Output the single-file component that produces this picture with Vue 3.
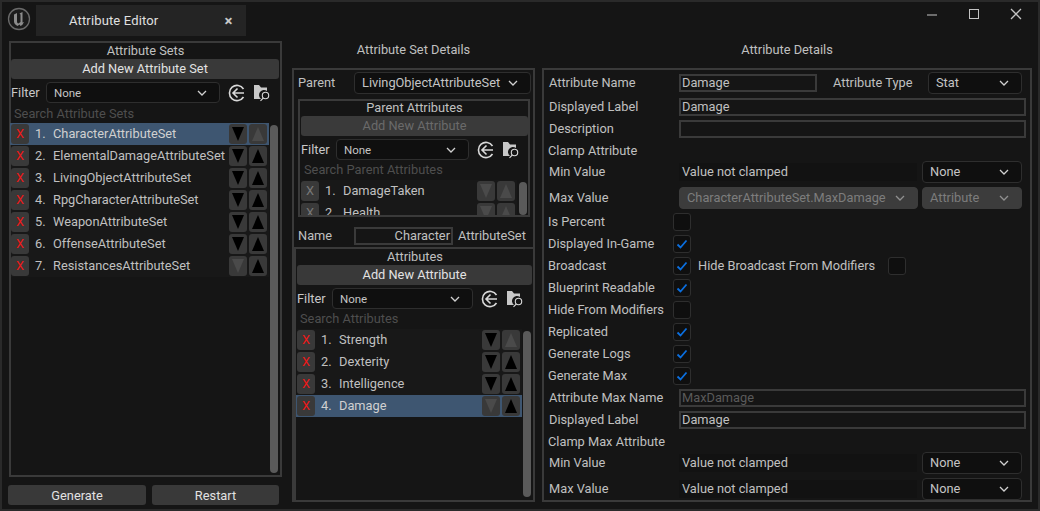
<template>
  <div class="win">
    <header class="top">
      <svg class="logo" width="24" height="24" viewBox="0 0 24 24">
        <circle cx="12" cy="12" r="10.5" fill="#1b1b1b" stroke="#6a6a6a" stroke-width="1.3" />
        <path d="M7 7.5 10 6 10 14.5Q10 16.5 11.5 16.5L13.5 15V7.5L12.500 6.5 15.5 5V15.5L17 15Q15.5 18.5 13.5 19L12.500 17.500 10.5 19Q7 17 7 14.5Z" fill="#8c8c8c" />
      </svg>
      <div class="tab"><span>Attribute Editor</span><i>×</i></div>
      <div class="winbtns">
        <svg width="16" height="16" viewBox="0 0 16 16"><path d="M1 8H11" stroke="#c4c4c4" stroke-width="1" /></svg>
        <svg width="16" height="16" viewBox="0 0 16 16"><rect x="1.5" y="2.5" width="9" height="9" fill="none" stroke="#c4c4c4" /></svg>
        <svg width="16" height="16" viewBox="0 0 16 16"><path d="M1 2L11 12M11 2L1 12" stroke="#c4c4c4" stroke-width="1.3" /></svg>
      </div>
    </header>

    <main class="cols">
      <!-- Attribute sets column -->
      <section class="col-sets">
        <div class="panel sets">
          <div class="ttl">Attribute Sets</div>
          <button class="btn">Add New Attribute Set</button>
          <div class="filter">
            <span>Filter</span>
            <div class="sel w174"><em>None</em><svg class="chev" viewBox="0 0 10 6"><path d="M1 1L5 5 9 1" /></svg></div>
            <svg class="ic back" viewBox="0 0 18 18"><path d="M15.5 5A7.6 7.6 0 1 0 15.5 13" /><path d="M9.5 4.5L5 9l4.500 4.500M5 9H16" /></svg>
            <svg class="ic find" viewBox="0 0 18 18"><path class="fl" d="M1 1H6L8 3.500H14V7A5 5 0 0 0 8 15H1Z" /><circle cx="12.500" cy="11.500" r="3.200" /><path d="M10.300 14L7.500 16.800" /></svg>
          </div>
          <div class="search">Search Attribute Sets</div>
          <div class="listwrap">
            <div class="list">
              <div v-for="(s, i) in sets" :key="s" class="row" :class="{ on: i === 0 }">
                <b class="x">X</b><span class="n">{{ i + 1 }}.</span><span class="nm">{{ s }}</span>
                <b class="ar" :class="{ dim: i === 6 }"><svg viewBox="0 0 12 14"><path d="M0 0H12L6 14Z" /></svg></b>
                <b class="ar" :class="{ dim: i === 0 }"><svg viewBox="0 0 12 14"><path d="M6 0L12 14H0Z" /></svg></b>
              </div>
            </div>
            <div class="sb"></div>
          </div>
        </div>
        <div class="foot">
          <button class="btn gen">Generate</button>
          <button class="btn rst">Restart</button>
        </div>
      </section>

      <!-- Attribute set details column -->
      <section class="col-mid">
        <div class="head">Attribute Set Details</div>
        <div class="panel mid">
          <div class="parent">
            <span>Parent</span>
            <div class="sel w177"><em>LivingObjectAttributeSet</em><svg class="chev" viewBox="0 0 10 6"><path d="M1 1L5 5 9 1" /></svg></div>
          </div>
          <div class="panel inner">
            <div class="ttl">Parent Attributes</div>
            <button class="btn off">Add New Attribute</button>
            <div class="filter">
              <span>Filter</span>
              <div class="sel w132"><em>None</em><svg class="chev" viewBox="0 0 10 6"><path d="M1 1L5 5 9 1" /></svg></div>
              <svg class="ic back" viewBox="0 0 18 18"><path d="M15.5 5A7.6 7.6 0 1 0 15.5 13" /><path d="M9.5 4.5L5 9l4.500 4.500M5 9H16" /></svg>
              <svg class="ic find" viewBox="0 0 18 18"><path class="fl" d="M1 1H6L8 3.500H14V7A5 5 0 0 0 8 15H1Z" /><circle cx="12.500" cy="11.500" r="3.200" /><path d="M10.300 14L7.500 16.800" /></svg>
            </div>
            <div class="search">Search Parent Attributes</div>
            <div class="listwrap clip">
              <div class="list">
                <div v-for="(s, i) in parents" :key="s" class="row pr">
                  <b class="x">X</b><span class="n">{{ i + 1 }}.</span><span class="nm">{{ s }}</span>
                  <b class="ar dim"><svg viewBox="0 0 12 14"><path d="M0 0H12L6 14Z" /></svg></b>
                  <b class="ar dim"><svg viewBox="0 0 12 14"><path d="M6 0L12 14H0Z" /></svg></b>
                </div>
              </div>
              <div class="sb"></div>
            </div>
          </div>
          <div class="name">
            <span class="lb">Name</span>
            <div class="inp nameinp">Character</div>
            <span>AttributeSet</span>
          </div>
          <div class="panel attrs">
            <div class="ttl">Attributes</div>
            <button class="btn">Add New Attribute</button>
            <div class="filter">
              <span>Filter</span>
              <div class="sel w140"><em>None</em><svg class="chev" viewBox="0 0 10 6"><path d="M1 1L5 5 9 1" /></svg></div>
              <svg class="ic back" viewBox="0 0 18 18"><path d="M15.5 5A7.6 7.6 0 1 0 15.5 13" /><path d="M9.5 4.5L5 9l4.500 4.500M5 9H16" /></svg>
              <svg class="ic find" viewBox="0 0 18 18"><path class="fl" d="M1 1H6L8 3.500H14V7A5 5 0 0 0 8 15H1Z" /><circle cx="12.500" cy="11.500" r="3.200" /><path d="M10.300 14L7.500 16.800" /></svg>
            </div>
            <div class="search">Search Attributes</div>
            <div class="listwrap">
              <div class="list">
                <div v-for="(s, i) in attrs" :key="s" class="row" :class="{ on: i === 3 }">
                  <b class="x">X</b><span class="n">{{ i + 1 }}.</span><span class="nm">{{ s }}</span>
                  <b class="ar" :class="{ dim: i === 3 }"><svg viewBox="0 0 12 14"><path d="M0 0H12L6 14Z" /></svg></b>
                  <b class="ar" :class="{ dim: i === 0 }"><svg viewBox="0 0 12 14"><path d="M6 0L12 14H0Z" /></svg></b>
                </div>
              </div>
              <div class="sb"></div>
            </div>
          </div>
        </div>
      </section>

      <!-- Attribute details column -->
      <section class="col-det">
        <div class="head">Attribute Details</div>
        <div class="panel det">
          <div class="f mb2">
            <label>Attribute Name</label>
            <div class="inp w138">Damage</div>
            <span class="atype">Attribute Type</span>
            <div class="sel w94"><em>Stat</em><svg class="chev" viewBox="0 0 10 6"><path d="M1 1L5 5 9 1" /></svg></div>
          </div>
          <div class="f"><label>Displayed Label</label><div class="inp grow">Damage</div></div>
          <div class="f"><label>Description</label><div class="inp grow"></div></div>
          <div class="f h21 sec">Clamp Attribute</div>
          <div class="f mb4">
            <label>Min Value</label>
            <div class="val">Value not clamped</div>
            <div class="sel w100"><em>None</em><svg class="chev" viewBox="0 0 10 6"><path d="M1 1L5 5 9 1" /></svg></div>
          </div>
          <div class="f mb2">
            <label>Max Value</label>
            <div class="sel dis w239"><em>CharacterAttributeSet.MaxDamage</em><svg class="chev" viewBox="0 0 10 6"><path d="M1 1L5 5 9 1" /></svg></div>
            <div class="sel dis w100"><em>Attribute</em><svg class="chev" viewBox="0 0 10 6"><path d="M1 1L5 5 9 1" /></svg></div>
          </div>
          <div v-for="c in checks" :key="c.t" class="f chk">
            <span class="cl">{{ c.t }}</span>
            <div class="cb"><svg v-if="c.v" viewBox="0 0 12 10"><path d="M1.500 5.500L4.500 8.500 10.500 1.500" /></svg></div>
            <template v-if="c.extra">
              <span class="ex">{{ c.extra }}</span>
              <div class="cb"></div>
            </template>
          </div>
          <div class="f"><label>Attribute Max Name</label><div class="inp grow ghost">MaxDamage</div></div>
          <div class="f"><label>Displayed Label</label><div class="inp grow">Damage</div></div>
          <div class="f h21 sec">Clamp Max Attribute</div>
          <div class="f mb4">
            <label>Min Value</label>
            <div class="val">Value not clamped</div>
            <div class="sel w100"><em>None</em><svg class="chev" viewBox="0 0 10 6"><path d="M1 1L5 5 9 1" /></svg></div>
          </div>
          <div class="f">
            <label>Max Value</label>
            <div class="val">Value not clamped</div>
            <div class="sel w100"><em>None</em><svg class="chev" viewBox="0 0 10 6"><path d="M1 1L5 5 9 1" /></svg></div>
          </div>
        </div>
      </section>
    </main>
  </div>
</template>

<script setup>
const sets = ['CharacterAttributeSet', 'ElementalDamageAttributeSet', 'LivingObjectAttributeSet', 'RpgCharacterAttributeSet', 'WeaponAttributeSet', 'OffenseAttributeSet', 'ResistancesAttributeSet']
const parents = ['DamageTaken', 'Health']
const attrs = ['Strength', 'Dexterity', 'Intelligence', 'Damage']
const checks = [
  { t: 'Is Percent', v: false },
  { t: 'Displayed In-Game', v: true },
  { t: 'Broadcast', v: true, extra: 'Hide Broadcast From Modifiers' },
  { t: 'Blueprint Readable', v: true },
  { t: 'Hide From Modifiers', v: false },
  { t: 'Replicated', v: true },
  { t: 'Generate Logs', v: true },
  { t: 'Generate Max', v: true }
]
</script>

<style>
html, body { margin: 0; background: #151515; }
</style>

<style scoped>
* { box-sizing: border-box; }
.win { width: 1040px; height: 511px; background: #151515; border: 2px solid #2a2a2a; color: #c0c0c0; font: 12.8px/16px Roboto, sans-serif; overflow: hidden; display: flex; flex-direction: column; }

.top { height: 34px; display: flex; align-items: flex-start; flex: none; }
.logo { margin: 5px 0 0 5px; }
.tab { width: 210px; height: 31px; margin: 3px 0 0 5px; background: #242424; display: flex; align-items: center; padding-left: 33px; color: #e0e0e0; font-size: 13px; letter-spacing: .15px; }
.tab i { font: 700 15px Roboto, sans-serif; margin-left: 66px; color: #c8c8c8; }
.winbtns { margin-left: auto; display: flex; gap: 26px; padding: 5px 12px 0 0; }
.winbtns svg { display: block; }

.cols { display: flex; flex: 1; align-items: flex-start; }
.panel { border: 2px solid #3a3a3a; }
.col-sets { width: 273px; margin: 5px 0 0 7px; }
.sets { height: 436px; }
.ttl { height: 16px; text-align: center; line-height: 16px; }
.btn { display: block; background: #393939; border: 0; border-radius: 3px; color: #e2e2e2; font: inherit; height: 20px; padding: 0; }
.sets .btn { width: 268px; }
.btn.off { background: #3a3a3a; color: #6a6a6a; }
.foot { display: flex; gap: 6px; margin: 8px 0 0 -1px; }
.foot .btn { padding-top: 2px; }
.gen { width: 138px; }
.rst { width: 127px; }

.filter { display: flex; align-items: center; height: 21px; margin-top: 3px; color: #c8c8c8; }
.filter > span { width: 35px; flex: none; }
.filter .sel { height: 21px; }
.filter .sel em { font-size: 11.5px; }
.ic { fill: none; stroke: #d8d8d8; stroke-width: 1.6; width: 18px; height: 18px; flex: none; }
.back { margin-left: 8px; }
.find { margin-left: 7px; }
.find .fl { fill: #c8c8c8; stroke: none; }
.find circle, .find path:last-child { stroke-width: 1.1; }
.sel { height: 22px; background: #0f0f0f; border: 1px solid #2e2e2e; border-radius: 4px; display: flex; align-items: center; justify-content: space-between; padding: 0 9px 0 7px; flex: none; color: #c4c4c4; }
.sel em { font-style: normal; white-space: nowrap; }
.chev { width: 10px; height: 6px; fill: none; stroke: #d0d0d0; stroke-width: 1.3; flex: none; margin-right: 3px; }
.dis { background: #3c3c3c; border-color: #3c3c3c; color: #7d7d7d; }
.dis .chev { stroke: #909090; }
.w174 { width: 174px; }
.w177 { width: 177px; }
.w132 { width: 133px; }
.w140 { width: 141px; }
.w94 { width: 94px; }
.w100 { width: 100px; }
.w239 { width: 239px; margin-right: 4px; }

.search { height: 20px; line-height: 20px; padding-left: 3px; color: #4e4e4e; white-space: nowrap; }
.listwrap { display: flex; }
.list { background: #181818; align-self: flex-start; flex: none; }
.row { height: 22px; display: flex; align-items: center; margin-left: -1px; padding-left: 1px; }
.row.on { background: #3e5671; color: #d0d0d0; }
.x { width: 18px; height: 20px; background: #393939; border-radius: 3px; color: #f01818; font-weight: 400; text-align: center; line-height: 20px; flex: none; }
.pr .x { color: #777; }
.n { width: 18px; margin-left: 6px; flex: none; }
.nm { flex: 1; white-space: nowrap; }
.ar { width: 18px; height: 20px; background: #393939; border-radius: 3px; margin-right: 2px; display: flex; align-items: center; justify-content: center; flex: none; }
.ar svg { width: 12px; height: 14px; fill: #000; }
.ar.dim svg { fill: #4a4a4a; }
.sb { width: 8px; margin: 2px 0 0 2px; border-radius: 4px; background: #5a5a5a; flex: none; }
.sets .search { line-height: 22px; }
.sets .listwrap { height: 350px; }
.sets .list { width: 258px; }
.sets .sb { margin-left: 1px; }

.col-mid { width: 243px; margin-left: 10px; }
.head { height: 27px; text-align: center; line-height: 18px; margin-top: 5px; white-space: nowrap; }
.mid { height: 434px; }
.parent { display: flex; align-items: center; height: 22px; margin: 2px 0 0 4px; }
.parent > span { width: 56px; }
.inner { height: 118px; margin: 5px 3px 0 4px; overflow: hidden; padding-left: 1px; }
.inner .ttl { height: 15px; line-height: 14px; }
.inner .btn { width: 227px; }
.clip { height: 40px; overflow: hidden; position: relative; }
.clip::after { content: ""; position: absolute; left: 0; right: 0; bottom: 0; height: 5px; background: linear-gradient(transparent, #0c0c0c); }
.inner .list { width: 216px; }
.inner .sb { height: 33px; }
.name { display: flex; align-items: center; height: 30px; padding: 8px 0 0 4px; }
.name .lb { width: 56px; }
.nameinp { width: 99px; text-align: right; margin-right: 5px; padding: 0 1px; }
.inp { height: 18px; border: 2px solid #3a3a3a; line-height: 14px; padding-left: 1px; white-space: nowrap; flex: none; }
.attrs { height: 253px; border-bottom: 0; border-right: 0; padding-left: 1px; }
.attrs .btn { width: 235px; }
.attrs .listwrap { height: 168px; }
.attrs .list { width: 225px; }
.attrs .sb { height: 166px; margin-left: 1px; }

.col-det { width: 490px; margin-left: 7px; }
.det { height: 434px; padding: 2px 0 0 5px; }
.f { display: flex; align-items: center; white-space: nowrap; height: 22px; }
.f label { width: 130px; flex: none; }
.f.h21 { height: 21px; }
.mb2 { margin-bottom: 2px; }
.mb4 { margin-bottom: 4px; }
.atype { margin: 0 14px 0 16px; width: 81px; }
.grow { width: 347px; }
.w138 { width: 138px; }
.sec { margin-left: -1px; }
.val { width: 238px; height: 18px; background: #121212; padding-left: 3px; line-height: 18px; margin-right: 5px; flex: none; }
.ghost { color: #5a5a5a; }
.chk { margin-left: -1px; }
.cl { width: 125px; flex: none; }
.cb { width: 18px; height: 18px; background: #0f0f0f; border: 1px solid #2e2e2e; border-radius: 3px; display: flex; align-items: center; justify-content: center; flex: none; }
.cb svg { width: 12px; height: 10px; fill: none; stroke: #0a6fe0; stroke-width: 1.8; }
.ex { margin: 0 12px 0 7px; width: 178px; }
</style>
